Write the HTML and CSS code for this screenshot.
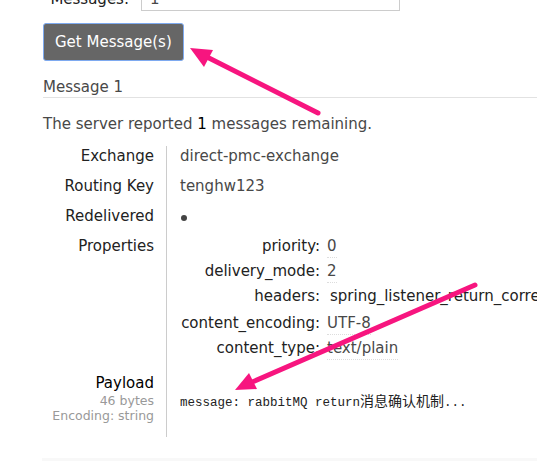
FILE: index.html
```html
<!DOCTYPE html>
<html lang="en">
<head>
    <meta charset="UTF-8">
    <title>Get messages</title>
    <link rel="stylesheet" href="styles.css">
</head>
<body>
    <div id="wrap">
        <div class="form-row">
            <label class="form-label">Messages:</label>
            <input class="form-input" type="text" value="1">
        </div>
        <button class="get-btn">Get Message(s)</button>

        <h3 class="msg-title">Message 1</h3>
        <p class="remaining">The server reported <span class="count">1</span> messages remaining.</p>

        <table class="facts">
            <tr>
                <th>Exchange</th>
                <td>direct-pmc-exchange</td>
            </tr>
            <tr>
                <th>Routing Key</th>
                <td>tenghw123</td>
            </tr>
            <tr>
                <th>Redelivered</th>
                <td><span class="dot"></span></td>
            </tr>
            <tr>
                <th>Properties</th>
                <td>
                    <table class="props">
                        <tr><th>priority:</th><td><abbr>0</abbr></td></tr>
                        <tr><th>delivery_mode:</th><td><abbr>2</abbr></td></tr>
                        <tr class="headers"><th>headers:</th><td>spring_listener_return_correlation</td></tr>
                        <tr><th>content_encoding:</th><td><abbr>UTF-8</abbr></td></tr>
                        <tr><th>content_type:</th><td><abbr>text/plain</abbr></td></tr>
                    </table>
                </td>
            </tr>
            <tr class="payload-row">
                <th>
                    Payload
                    <sub>46 bytes</sub>
                    <sub>Encoding: string</sub>
                </th>
                <td><pre class="payload">message: rabbitMQ return<span class="cjk">消息确认机制</span>...</pre></td>
            </tr>
        </table>

        <div class="next-section"></div>
    </div>

    <svg class="annot" width="537" height="461" viewBox="0 0 537 461">
        <line x1="318" y1="113" x2="203" y2="55" />
        <polygon points="190,48 213,50 204,67" />
        <line x1="475" y1="285" x2="250" y2="383" />
        <polygon points="235,390 257,389 249,373" />
    </svg>
</body>
</html>
```

FILE: styles.css
```css
html, body {
    margin: 0;
    padding: 0;
    overflow: hidden;
}
body {
    background: #fff;
    font-family: "DejaVu Sans", Verdana, sans-serif;
    font-size: 15px;
    line-height: 20px;
    color: #484848;
}
#wrap {
    padding-left: 43px;
    height: 461px;
    overflow: hidden;
}
.form-row {
    display: flex;
    align-items: flex-end;
    margin-top: -14px;
    height: 25px;
}
.form-label {
    width: 86px;
    text-align: right;
    color: #222;
    line-height: 18px;
    padding-bottom: 3px;
}
.form-input {
    margin-left: 12px;
    width: 259px;
    height: 25px;
    box-sizing: border-box;
    border: 1px solid #ccc;
    padding: 0 8px;
    font: inherit;
    color: #484848;
}
.get-btn {
    display: block;
    margin-top: 12px;
    height: 38px;
    padding: 0 11px;
    background: #666;
    color: #fff;
    border: 1px solid #7eaaf0;
    border-radius: 3px;
    font: inherit;
}
.msg-title {
    margin: 16px 0 0;
    font-weight: normal;
    font-size: 15px;
    line-height: 20px;
    padding-bottom: 0;
    border-bottom: 1px solid #e2e2e2;
    color: #484848;
}
.remaining {
    margin: 16px 0 12px;
}
.count {
    color: #000;
}
.facts {
    border-collapse: collapse;
    table-layout: fixed;
    width: 600px;
}
.facts > tbody > tr > th {
    width: 111px;
    padding: 0 12px 10px 0;
    text-align: right;
    vertical-align: top;
    font-weight: normal;
    color: #222;
    white-space: nowrap;
    border-right: 1px solid #ccc;
}
.facts > tbody > tr > td {
    padding: 0 0 10px 13px;
    vertical-align: top;
    white-space: nowrap;
}
.dot {
    display: inline-block;
    width: 6px;
    height: 6px;
    border-radius: 50%;
    background: #444;
    margin-left: 1px;
}
.props {
    border-collapse: collapse;
}
.props th {
    width: 140px;
    text-align: right;
    font-weight: normal;
    color: #222;
    padding: 0 0 5px;
    vertical-align: top;
    white-space: nowrap;
}
.props td {
    padding: 0 0 5px 7px;
    vertical-align: top;
    white-space: nowrap;
}
.props .headers th,
.props .headers td {
    padding-bottom: 7px;
}
.props .headers td {
    padding-left: 10px;
    color: #222;
}
.props abbr {
    text-decoration: none;
    border-bottom: 1px dotted #ddd;
    padding-bottom: 2px;
}
.facts .payload-row > th {
    color: #000;
    padding-bottom: 14px;
}
.facts .payload-row > td {
    padding-bottom: 14px;
}
.payload-row sub {
    display: block;
    font-size: 12.5px;
    line-height: 15px;
    vertical-align: baseline;
    color: #999;
}
.payload {
    margin: 17px 0 0;
    font-family: "Liberation Mono", "Noto Sans CJK SC", monospace;
    font-size: 12.5px;
    line-height: 20px;
    color: #222;
}
.cjk {
    font-family: "Noto Sans CJK SC", sans-serif;
    font-size: 14px;
}
.next-section {
    margin-top: 21px;
    margin-left: -1px;
    height: 20px;
    background: #f8f8f8;
}
.annot {
    position: absolute;
    left: 0;
    top: 0;
    pointer-events: none;
}
.annot line {
    stroke: #f7157f;
    stroke-width: 5;
    stroke-linecap: round;
}
.annot polygon {
    fill: #f7157f;
}
```
